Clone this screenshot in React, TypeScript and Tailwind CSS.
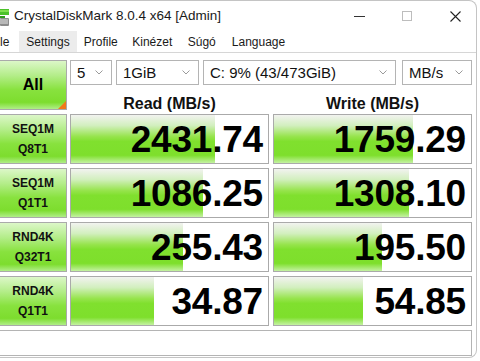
import React from "react";

const rows = [
  { l1: "SEQ1M", l2: "Q8T1", r: "2431.74", w: "1759.29", rw: 144, ww: 139 },
  { l1: "SEQ1M", l2: "Q1T1", r: "1086.25", w: "1308.10", rw: 132, ww: 135 },
  { l1: "RND4K", l2: "Q32T1", r: "255.43", w: "195.50", rw: 112, ww: 108 },
  { l1: "RND4K", l2: "Q1T1", r: "34.87", w: "54.85", rw: 83, ww: 89 },
];

const barBg =
  "bg-[linear-gradient(to_bottom,#f2f3f0_0%,#d2efbe_22%,#96e44c_45%,#80e02e_55%,#7edf2c_84%,#c4f2a2_100%)]";
const labelBg =
  "bg-[linear-gradient(to_bottom,#dcf7c8_0%,#b4ed8a_30%,#88e23e_60%,#7ddd2e_86%,#b0ee88_100%)]";

function Chevron() {
  return (
    <svg width="8" height="5" viewBox="0 0 8 5" className="shrink-0">
      <path d="M0.5 0.5 L4 4 L7.5 0.5" fill="none" stroke="#9a9a9a" strokeWidth="1" />
    </svg>
  );
}

function Drop({ w, text, pl }: { w: string; text: string; pl?: string }) {
  return (
    <div
      className={`${w} h-[25px] border border-[#b4b4b4] bg-white flex items-center justify-between ${pl ?? "pl-[6px]"} pr-[8px] text-[15px] text-[#111]`}
    >
      <span className="leading-none">{text}</span>
      <Chevron />
    </div>
  );
}

function NumBox({ value, width }: { value: string; width: number }) {
  return (
    <div className="relative w-[199px] h-[50px] border border-[#aaaaaa] bg-white flex items-center justify-end pr-[5px]">
      <div className={`absolute left-0 top-0 bottom-0 ${barBg}`} style={{ width }} />
      <span className="relative font-bold text-[37px] leading-none text-black tracking-[-0.2px]">
        {value}
      </span>
    </div>
  );
}

export default function App() {
  return (
    <div
      className="w-[480px] h-[361px] bg-white overflow-hidden"
      style={{ fontFamily: '"Liberation Sans", Arial, sans-serif' }}
    >
      <div className="w-[477px] h-[358px] border-t border-r border-b border-[#c4c4c4] rounded-tr-[8px] rounded-br-[8px] bg-white flex flex-col">
        {/* Title bar */}
        <div className="h-[30px] flex items-center">
          <svg width="9" height="17" viewBox="0 0 9 17" className="ml-0 mt-[2px]">
            <rect x="0" y="0" width="9" height="6" fill="#4cc22a" />
            <rect x="0" y="1" width="9" height="2" fill="#7fe04e" />
            <rect x="0" y="7" width="5" height="2" fill="#2e9a1c" />
            <rect x="0" y="9" width="9" height="8" rx="1" fill="#8c8c8c" />
            <rect x="0" y="10" width="8" height="5" fill="#b8b8b8" />
          </svg>
          <span className="ml-[5px] text-[13.5px] text-[#1a1a1a]">CrystalDiskMark 8.0.4 x64 [Admin]</span>
          <div className="ml-auto flex items-center pr-[15px]">
            <div className="w-[11px] h-[1px] bg-[#333]" />
            <div className="ml-[37px] w-[10px] h-[10px] border border-[#bdbdbd]" />
            <svg width="11" height="11" viewBox="0 0 11 11" className="ml-[38px]">
              <path d="M0.5 0.5 L10.5 10.5 M10.5 0.5 L0.5 10.5" stroke="#222" strokeWidth="1.1" />
            </svg>
          </div>
        </div>
        {/* Menu bar */}
        <div className="h-[22px] border-b border-[#d6d6d6] flex items-stretch text-[12px] text-[#1a1a1a]">
          <div className="flex items-center pr-[10px]">le</div>
          <div className="flex items-center px-[7px] bg-[#ececec]">Settings</div>
          <div className="flex items-center px-[7px]">Profile</div>
          <div className="flex items-center px-[7.5px]">Kinézet</div>
          <div className="flex items-center px-[8px]">Súgó</div>
          <div className="flex items-center px-[8px]">Language</div>
        </div>
        {/* Body */}
        <div className="pt-[7px] pr-[4px] flex flex-col gap-[4px]">
          <div className="flex h-[50px]">
            <div
              className={`relative w-[67px] h-[50px] border-t border-r border-b border-[#aaaaaa] ${labelBg} flex items-center justify-center`}
            >
              <span className="font-bold text-[16px] text-black">All</span>
              <svg width="8" height="8" viewBox="0 0 8 8" className="absolute right-0 bottom-0">
                <path d="M8 0 L8 8 L0 8 Z" fill="#f07a1a" />
              </svg>
            </div>
            <div className="ml-[3px] flex flex-col">
              <div className="flex h-[25px]">
                <Drop w="w-[42px]" text="5" pl="pl-[6px]" />
                <div className="w-[4px]" />
                <Drop w="w-[83px]" text="1GiB" />
                <div className="w-[4px]" />
                <Drop w="w-[193px]" text="C: 9% (43/473GiB)" />
                <div className="w-[6px]" />
                <Drop w="w-[70px]" text="MB/s" pl="pl-[6px]" />
              </div>
              <div className="flex h-[29px] items-center gap-[4px] pt-[8px]">
                <div className="w-[199px] text-center font-bold text-[16px] text-[#111]">Read (MB/s)</div>
                <div className="w-[199px] text-center font-bold text-[16px] text-[#111]">Write (MB/s)</div>
              </div>
            </div>
          </div>
          {rows.map((r, i) => (
            <div key={i} className="flex h-[50px]">
              <div
                className={`w-[67px] h-[50px] border-t border-r border-b border-[#aaaaaa] ${labelBg} flex flex-col items-center justify-center gap-[8px] font-bold text-[12px] leading-none text-[#111]`}
              >
                <span>{r.l1}</span>
                <span>{r.l2}</span>
              </div>
              <div className="ml-[3px]">
                <NumBox value={r.r} width={r.rw} />
              </div>
              <div className="ml-[4px]">
                <NumBox value={r.w} width={r.ww} />
              </div>
            </div>
          ))}
          <div className="h-[26px] w-[472px] border-t border-r border-b border-[#b4b4b4] bg-white" />
        </div>
      </div>
    </div>
  );
}
